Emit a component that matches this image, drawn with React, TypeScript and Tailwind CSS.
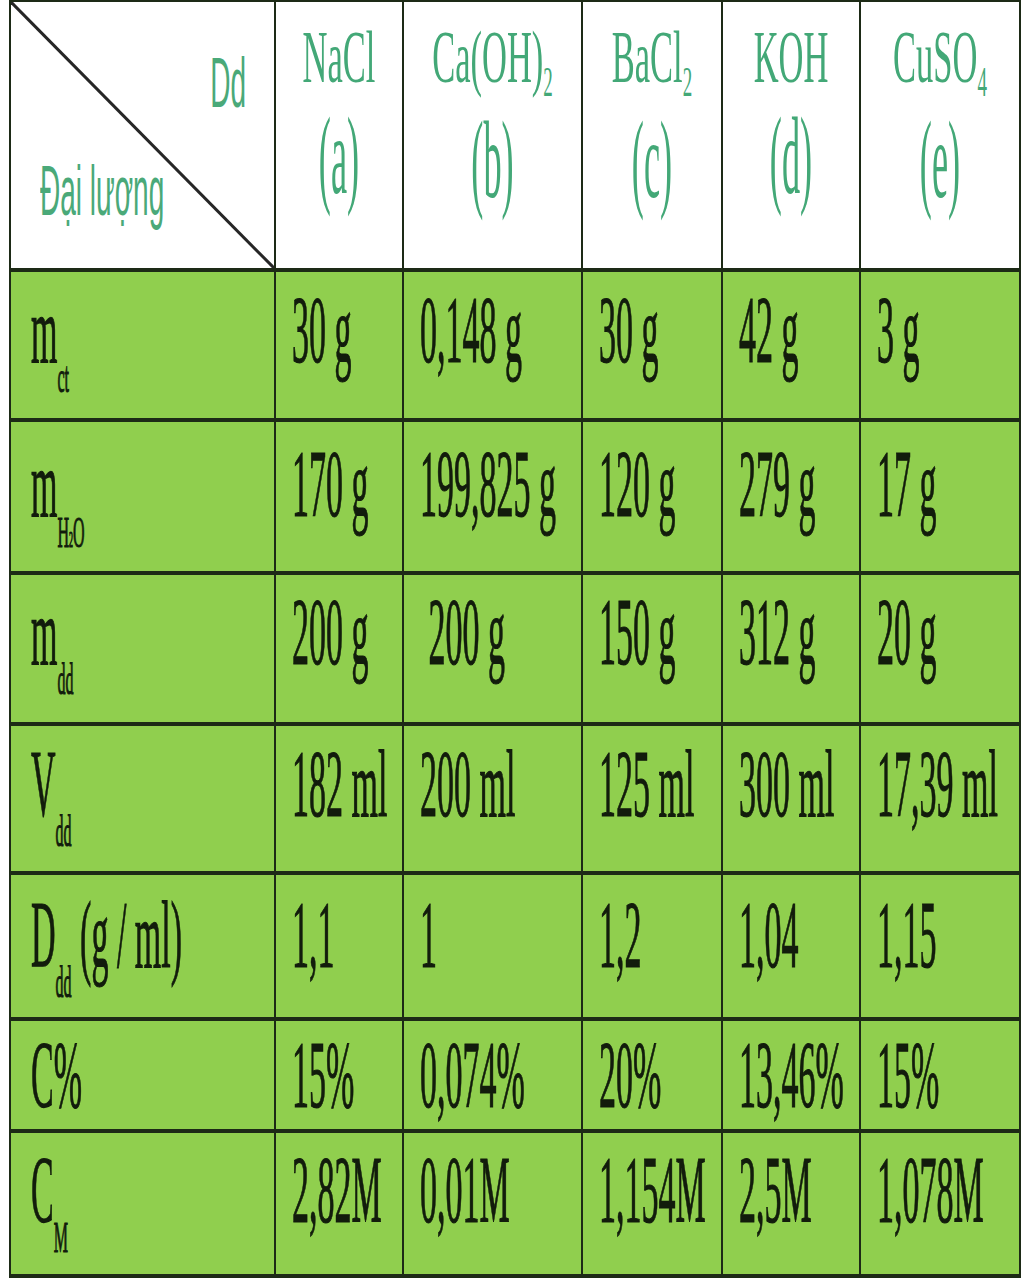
import type { ReactNode } from "react";

const serif = "font-['Liberation_Serif','Times_New_Roman',serif]";
const sans = "font-['Liberation_Sans',Arial,sans-serif]";

function Sub({ children }: { children: ReactNode }) {
  return <span className="align-[-10.5px] text-[16px]">{children}</span>;
}

function HeadSub({ children }: { children: ReactNode }) {
  return <span className="align-[-6.5px] text-[19px]">{children}</span>;
}

interface Row {
  label: ReactNode;
  values: string[];
  height: string;
  pad: string;
}

const rows: Row[] = [
  { label: <>m<Sub>ct</Sub></>, values: ["30 g", "0,148 g", "30 g", "42 g", "3 g"], height: "h-[150px]", pad: "pt-[11px]" },
  {
    label: (
      <>
        m
        <Sub>
          H<span className="text-[8px]">2</span>O
        </Sub>
      </>
    ),
    values: ["170 g", "199,825 g", "120 g", "279 g", "17 g"],
    height: "h-[153px]",
    pad: "pt-[15px]",
  },
  { label: <>m<Sub>dd</Sub></>, values: ["200 g", " 200 g", "150 g", "312 g", "20 g"], height: "h-[151px]", pad: "pt-[10px]" },
  { label: <>V<Sub>dd</Sub></>, values: ["182 ml", "200 ml", "125 ml", "300 ml", "17,39 ml"], height: "h-[149px]", pad: "pt-[11px]" },
  { label: <>D<Sub>dd</Sub> (g / ml)</>, values: ["1,1", "1", "1,2", "1,04", "1,15"], height: "h-[146px]", pad: "pt-[13px]" },
  { label: <>C%</>, values: ["15%", "0,074%", "20%", "13,46%", "15%"], height: "h-[112px]", pad: "pt-[7px]" },
  { label: <>C<Sub>M</Sub></>, values: ["2,82M", "0,01M", "1,154M", "2,5M", "1,078M"], height: "h-[145px]", pad: "pt-[10px]" },
];

const heads: { name: ReactNode; tag: string }[] = [
  { name: <>NaCl</>, tag: "(a)" },
  { name: <>Ca(OH)<HeadSub>2</HeadSub></>, tag: "(b)" },
  { name: <>BaCl<HeadSub>2</HeadSub></>, tag: "(c)" },
  { name: <>KOH</>, tag: "(d)" },
  { name: <>CuSO<HeadSub>4</HeadSub></>, tag: "(e)" },
];

const grid = "grid grid-cols-[265px_128px_179px_140px_138px_158px]";

function DataText({ children }: { children: ReactNode }) {
  return (
    <span
      className={`inline-block origin-top scale-y-[2.82] whitespace-pre text-[34px] leading-none text-[#121c0c] [-webkit-text-stroke:0.4px_#121c0c] ${serif}`}
    >
      {children}
    </span>
  );
}

export default function App() {
  return (
    <div className="min-h-[1280px] bg-white">
      <div className="ml-[9px] w-[1012px] border-x-2 border-t-2 border-[#1d2a16]">
        {/* header row */}
        <div className={`${grid} h-[270px] border-b-4 border-[#1d2a16] bg-white`}>
          <div className="relative flex flex-col border-r-2 border-[#1d2a16]">
            <svg className="absolute inset-0 h-full w-full" preserveAspectRatio="none" viewBox="0 0 100 100">
              <line x1="0" y1="0" x2="100" y2="100" stroke="#262626" strokeWidth="3" vectorEffect="non-scaling-stroke" />
            </svg>
            <span
              className={`mr-[28px] mt-[47px] inline-block origin-top scale-y-[2.5] self-end whitespace-nowrap text-[28px] leading-none text-[#4aa979] ${sans}`}
            >
              Dd
            </span>
            <span
              className={`ml-[29px] mt-[80px] inline-block origin-top scale-y-[2.5] self-start whitespace-nowrap text-[28px] leading-none text-[#4aa979] ${sans}`}
            >
              Đại lượng
            </span>
          </div>
          {heads.map((h, i) => (
            <div
              key={i}
              className={`flex flex-col items-center ${i < 4 ? "border-r-2 border-[#1d2a16]" : ""}`}
            >
              <span
                className={`mt-[17px] inline-block origin-top scale-y-[2.17] whitespace-nowrap text-[34.5px] leading-none text-[#43a877] ${serif}`}
              >
                {h.name}
              </span>
              <span
                className={`mt-[48px] inline-block origin-top scale-y-[3.03] whitespace-nowrap text-[36.3px] leading-none text-[#43a877] ${serif}`}
              >
                {h.tag}
              </span>
            </div>
          ))}
        </div>

        {rows.map((r, ri) => (
          <div key={ri} className={`${grid} ${r.height} border-b-4 border-[#1d2a16] bg-[#90cf4e]`}>
            <div className={`border-r-2 border-[#1d2a16] pl-[20px] ${r.pad}`}>
              <DataText>{r.label}</DataText>
            </div>
            {r.values.map((v, vi) => (
              <div key={vi} className={`pl-[16px] ${r.pad} ${vi < 4 ? "border-r-2 border-[#1d2a16]" : ""}`}>
                <DataText>{v}</DataText>
              </div>
            ))}
          </div>
        ))}
      </div>
    </div>
  );
}
